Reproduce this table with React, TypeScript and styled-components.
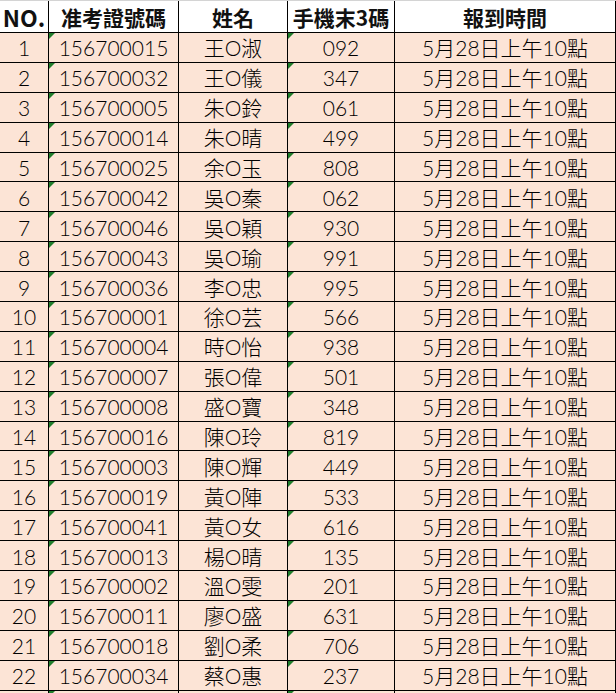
import React from "react";
import styled, { createGlobalStyle } from "styled-components";

const GlobalStyle = createGlobalStyle`
  html, body {
    margin: 0;
    padding: 0;
    background: #ffffff;
    overflow: hidden;
  }
`;

const rows: [string, string, string][] = [
  ["156700015", "王O淑", "092"],
  ["156700032", "王O儀", "347"],
  ["156700005", "朱O鈴", "061"],
  ["156700014", "朱O晴", "499"],
  ["156700025", "余O玉", "808"],
  ["156700042", "吳O秦", "062"],
  ["156700046", "吳O穎", "930"],
  ["156700043", "吳O瑜", "991"],
  ["156700036", "李O忠", "995"],
  ["156700001", "徐O芸", "566"],
  ["156700004", "時O怡", "938"],
  ["156700007", "張O偉", "501"],
  ["156700008", "盛O寶", "348"],
  ["156700016", "陳O玲", "819"],
  ["156700003", "陳O輝", "449"],
  ["156700019", "黃O陣", "533"],
  ["156700041", "黃O女", "616"],
  ["156700013", "楊O晴", "135"],
  ["156700002", "溫O雯", "201"],
  ["156700011", "廖O盛", "631"],
  ["156700018", "劉O柔", "706"],
  ["156700034", "蔡O惠", "237"],
];

const Sheet = styled.div`
  width: 616px;
  height: 693px;
  overflow: hidden;
  display: grid;
  grid-template-columns: 49px 130px 109px 107px 221px;
  grid-template-rows: 32px;
  grid-auto-rows: 29.9px;
  border-top: 1px solid #d4d4d4;
  box-sizing: border-box;
  font-family: "Lato", "Noto Sans CJK TC", sans-serif;
`;

const HeadCell = styled.div<{ $wide?: boolean }>`
  background: #ffffff;
  border-right: 1px solid #000;
  border-bottom: 1px solid #000;
  box-sizing: border-box;
  display: flex;
  align-items: center;
  justify-content: center;
  font-family: "Noto Sans CJK TC", sans-serif;
  font-weight: 700;
  font-size: ${(p) => (p.$wide ? "23px" : "21px")};
  color: #111;
  line-height: 1;
  white-space: nowrap;
  padding-top: 1px;
`;

const Cell = styled.div`
  position: relative;
  background: #fce4d6;
  border-right: 1px solid #000;
  border-bottom: 1px solid #000;
  box-sizing: border-box;
  display: flex;
  align-items: center;
  justify-content: center;
  font-size: 21px;
  font-weight: 300;
  color: #000;
  line-height: 1;
  white-space: nowrap;
  padding-top: 1px;
`;

const TextMark = styled.span`
  position: absolute;
  left: 0;
  top: 0;
  width: 0;
  height: 0;
  border-top: 6px solid #1f7d2c;
  border-right: 6px solid transparent;
`;

const headers = ["NO.", "准考證號碼", "姓名", "手機末3碼", "報到時間"];

export default function App() {
  return (
    <>
      <GlobalStyle />
      <Sheet>
        {headers.map((h, i) => (
          <HeadCell key={h} $wide={i === 0}>
            {h}
          </HeadCell>
        ))}
        {rows.map(([id, name, phone], i) => (
          <React.Fragment key={id}>
            <Cell>{i + 1}</Cell>
            <Cell>
              <TextMark />
              {id}
            </Cell>
            <Cell>{name}</Cell>
            <Cell>
              <TextMark />
              {phone}
            </Cell>
            <Cell>5月28日上午10點</Cell>
          </React.Fragment>
        ))}
        <Cell />
        <Cell>
          <TextMark />
        </Cell>
        <Cell />
        <Cell>
          <TextMark />
        </Cell>
        <Cell />
      </Sheet>
    </>
  );
}
